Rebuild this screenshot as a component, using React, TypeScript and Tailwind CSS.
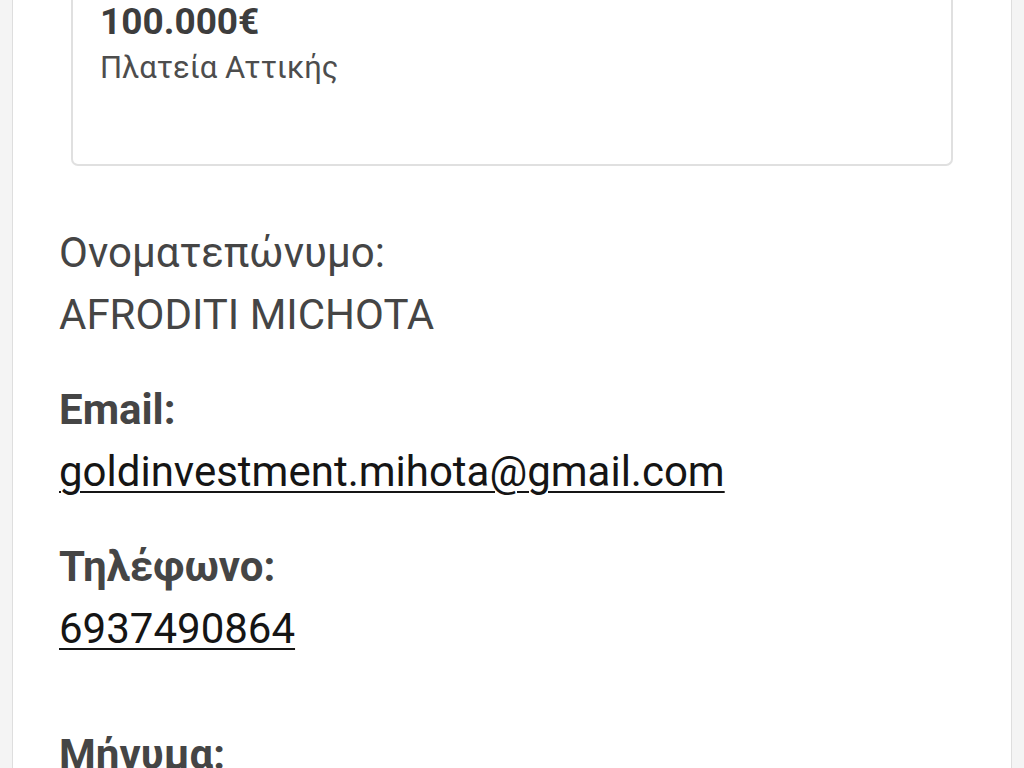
export default function App() {
  return (
    <div className="flex h-[768px] w-[1024px] overflow-hidden bg-[#f4f4f4] font-['Roboto',sans-serif]">
      <div className="ml-[12px] mr-[12px] flex-1 border-x border-[#dedede] bg-white">
        <div className="px-[58px]">
          <div className="h-[166px] rounded-b-[7px] border-x-2 border-b-2 border-[#e0e0e0] px-[27px]">
            <p className="text-[37px] font-bold leading-[44px] text-[#3d3d3d]">100.000€</p>
            <p className="mt-[2px] text-[31px] leading-[44px] text-[#4d4d4d]">Πλατεία Αττικής</p>
          </div>
        </div>

        <div className="mt-[56px] pl-[46px] text-[42px] leading-[62px] text-[#454545]">
          <p>Ονοματεπώνυμο:</p>
          <p>AFRODITI MICHOTA</p>

          <p className="mt-[33px] font-bold">Email:</p>
          <a href="#" className="block text-[#151515] underline decoration-2 underline-offset-[5px]">
            goldinvestment.mihota@gmail.com
          </a>

          <p className="mt-[33px] font-bold">Τηλέφωνο:</p>
          <a href="#" className="block text-[#151515] underline decoration-2 underline-offset-[5px]">
            6937490864
          </a>

          <p className="mt-[64px] font-bold">Μήνυμα:</p>
        </div>
      </div>
    </div>
  );
}
